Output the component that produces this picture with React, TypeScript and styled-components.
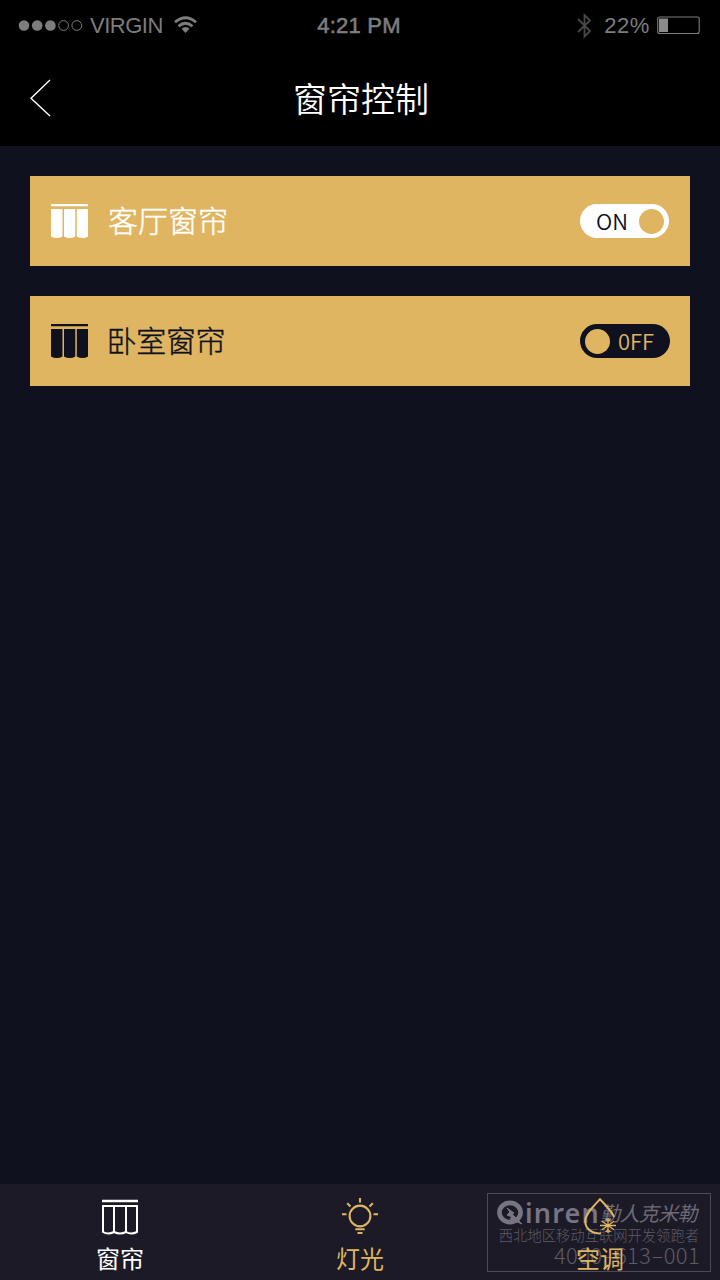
import React from 'react';
import styled, { createGlobalStyle } from 'styled-components';

const GOLD = '#dfb561';
const NAVY = '#10111f';

const GlobalStyle = createGlobalStyle`
  * { box-sizing: border-box; }
  body { margin: 0; background: ${NAVY}; }
`;

const Screen = styled.div`
  position: relative;
  display: flex;
  flex-direction: column;
  width: 720px;
  height: 1280px;
  overflow: hidden;
  background: ${NAVY};
  font-family: 'Noto Sans CJK SC', sans-serif;
`;

const StatusBar = styled.header`
  display: grid;
  grid-template-columns: 1fr auto 1fr;
  align-items: center;
  height: 52px;
  padding: 0 20px 0 18px;
  background: #000;
  color: #7d7d7d;
  font: 22px/52px 'Liberation Sans', sans-serif;
`;

const StatusGroup = styled.div<{ $end?: boolean }>`
  display: flex;
  align-items: center;
  justify-content: ${p => (p.$end ? 'flex-end' : 'flex-start')};
`;

const Carrier = styled.span`
  margin: 0 11px 0 7px;
  letter-spacing: -0.5px;
`;

const Clock = styled.span`
  -webkit-text-stroke: 0.6px currentColor;
  letter-spacing: 0.25px;
`;

const Percent = styled.span`
  margin: 0 7px 0 12px;
  letter-spacing: 0.6px;
`;

const NavBar = styled.nav`
  display: grid;
  grid-template-columns: 60px 1fr 60px;
  align-items: center;
  height: 94px;
  background: #000;
  color: #fff;
`;

const BackButton = styled.button`
  display: flex;
  padding: 0 0 2px 29px;
  border: 0;
  background: none;
`;

const Title = styled.h1`
  margin: 0;
  padding: 0 0 3px 2px;
  font-size: 34px;
  font-weight: 350;
  line-height: 91px;
  text-align: center;
`;

const List = styled.main`
  display: flex;
  flex: 1;
  flex-direction: column;
  gap: 30px;
  padding: 30px;
`;

const Row = styled.section<{ $on: boolean }>`
  display: flex;
  align-items: center;
  height: 90px;
  padding: 0 20px 0 21px;
  background: ${GOLD};
  color: ${p => (p.$on ? '#fff' : NAVY)};
`;

const RowLabel = styled.span<{ $on: boolean }>`
  flex: 1;
  padding-bottom: 3px;
  margin-left: ${p => (p.$on ? 19 : 17.5)}px;
  font-size: 30px;
  font-weight: 300;
  -webkit-text-stroke: 0.4px currentColor;
  line-height: 87px;
  letter-spacing: ${p => (p.$on ? 0 : -0.3)}px;
`;

const Toggle = styled.button<{ $on: boolean }>`
  display: flex;
  flex-direction: ${p => (p.$on ? 'row' : 'row-reverse')};
  align-items: center;
  justify-content: space-between;
  width: ${p => (p.$on ? 89 : 90)}px;
  height: 34px;
  margin-right: ${p => (p.$on ? 1 : 0)}px;
  padding: ${p => (p.$on ? '0 5px 0 16px' : '0 16px 0 5px')};
  border: 0;
  border-radius: 17px;
  background: ${p => (p.$on ? '#fff' : NAVY)};
  color: ${p => (p.$on ? NAVY : GOLD)};
  font: 350 22px/32px 'Noto Sans CJK SC', sans-serif;
`;

const ToggleText = styled.span`
  padding-bottom: 2px;
`;

const Knob = styled.span`
  width: 25px;
  height: 25px;
  border-radius: 50%;
  background: ${GOLD};
`;

const TabBar = styled.footer`
  display: grid;
  grid-template-columns: repeat(3, 1fr);
  height: 96px;
  background: #1c1a26;
`;

const Tab = styled.button<{ $active?: boolean }>`
  position: relative;
  z-index: 2;
  display: flex;
  flex-direction: column;
  align-items: center;
  padding: 13px 0 0;
  border: 0;
  background: none;
  color: ${p => (p.$active ? '#fff' : GOLD)};
  font: 400 24px/42px 'Noto Sans CJK SC', sans-serif;
`;

const Stamp = styled.aside`
  position: absolute;
  z-index: 1;
  right: 9px;
  bottom: 8px;
  display: flex;
  flex-direction: column;
  align-items: flex-end;
  width: 224px;
  height: 79px;
  padding: 5px 11px 0;
  border: 1px solid #4b4a55;
  color: #5d5b67;
  white-space: nowrap;
  pointer-events: none;
`;

const StampBrand = styled.div`
  display: flex;
  align-items: center;
  height: 28px;
`;

const BrandLatin = styled.span`
  margin-left: 1px;
  color: #777581;
  font: 600 27px/28px 'Noto Sans', sans-serif;
  letter-spacing: 1.2px;
`;

const BrandHan = styled.span`
  margin-right: 2px;
  color: #6d6b76;
  font-size: 20px;
  font-style: italic;
  line-height: 28px;
  font-weight: 400;
  letter-spacing: -0.6px;
`;

const StampLine = styled.div`
  margin-top: -1px;
  font-size: 14.3px;
  font-weight: 300;
  line-height: 17px;
`;

const StampPhone = styled.div`
  margin-right: -1px;
  font-size: 22px;
  font-weight: 300;
  line-height: 23px;
  letter-spacing: 0.3px;
`;

const PhoneDash = styled.span`
  display: inline-block;
  margin: 0 2.5px;
  transform: scaleX(1.7);
`;

const SignalDots = () => (
  <svg width="65" height="12" fill="currentColor">
    {[6, 19.2, 32.4].map(x => <circle key={x} cx={x} cy="5.5" r="5.3" />)}
    {[45.6, 58.8].map(x => <circle key={x} cx={x} cy="5.5" r="4.9" fill="none" stroke="currentColor" />)}
  </svg>
);

const WifiIcon = () => (
  <svg width="24" height="20" viewBox="0 0 24 20" fill="none" stroke="currentColor" strokeWidth="2.8">
    <path d="M1 6.2Q11.5-2.8 22 6.2M4.5 10.2Q11.5 4.2 18.5 10.2" />
    <path d="M7.5 12.7Q11.5 9.5 15.5 12.7L11.5 17Z" fill="currentColor" stroke="none" />
  </svg>
);

const BluetoothIcon = () => (
  <svg width="15" height="26" viewBox="0 0 15 26" fill="none" stroke="#484848" strokeWidth="1.8">
    <path d="M1 6L13 18L7.5 23.5V2L13 7.5L1 19" />
  </svg>
);

const BatteryIcon = () => (
  <svg width="43" height="20" viewBox="0 0 43 20">
    <rect x="0.7" y="1" width="41.5" height="16.5" rx="2" fill="none" stroke="currentColor" strokeWidth="1.1" />
    <path d="M2 2.5H11V16H2Z" fill="#8b8b8b" />
  </svg>
);

const BackIcon = () => (
  <svg width="22" height="38" fill="none" stroke="#fff" strokeWidth="1.4">
    <path d="M21 1L2 19.3L21 37" />
  </svg>
);

const CurtainIcon = () => (
  <svg width="38" height="34" viewBox="0 0 38 34" fill="currentColor">
    <path d="M0 0H37V2.2H0ZM0 5H11.5V32.5Q9 34 6 34Q2.5 34 0 32.5ZM13 5H24.3V32.5Q22 34 18.7 34Q15.5 34 13 32.5ZM25.8 5H37V32.5Q34.5 34 31.5 34Q28.5 34 25.8 32.5Z" />
  </svg>
);

const CurtainTabIcon = () => (
  <svg width="40" height="40" viewBox="0 0 40 40" fill="none" stroke="currentColor" strokeWidth="2">
    <path d="M2 4H38" strokeWidth="2.3" />
    <path d="M3 9H37V35Q31 38 26 35Q20 38 14 35Q8 38 3 35ZM14 9V35M26 9V35" />
  </svg>
);

const LampIcon = () => (
  <svg width="40" height="40" viewBox="0 0 40 40" fill="none" stroke="currentColor" strokeWidth="2.1">
    <circle cx="20" cy="19" r="10.4" />
    <path d="M20 1V5.5M2 17.2H6.5M33.5 17.2H38M7.2 6.2L10.5 9.5M32.8 6.2L29.5 9.5M15.3 32.2H24.7M17.5 36H22.5" />
  </svg>
);

const ClimateIcon = () => (
  <svg width="40" height="40" viewBox="0 0 40 40" fill="none" stroke="currentColor" strokeWidth="2">
    <path d="M21 36.3C11 37.2 5.2 31 5.2 24C5.2 17.5 13.2 9.5 20 2.3Q30.5 13 34.2 20" />
    <path strokeWidth="1.3" d="M28 21V36M20 28.5H36M22 24.3L34 32.7M34 24.3L22 32.7M25.6 22L28 24.2L30.4 22M25.6 35L28 32.8L30.4 35" />
  </svg>
);

const BrandMark = () => (
  <svg width="27" height="27" viewBox="0 0 27 27" fill="none" stroke="#777581">
    <ellipse cx="13" cy="12.5" rx="10.6" ry="9.6" strokeWidth="4.6" />
    <path d="M10 8L17 13L15 14L25 24L13 19L15 17L10 15L13 12Z" fill="#777581" strokeWidth="1" />
  </svg>
);

const curtains = [
  { name: '客厅窗帘', on: true, state: 'ON' },
  { name: '卧室窗帘', on: false, state: '0FF' },
];

export default function App() {
  return (
    <Screen>
      <GlobalStyle />
      <StatusBar>
        <StatusGroup><SignalDots /><Carrier>VIRGIN</Carrier><WifiIcon /></StatusGroup>
        <Clock>4:21 PM</Clock>
        <StatusGroup $end><BluetoothIcon /><Percent>22%</Percent><BatteryIcon /></StatusGroup>
      </StatusBar>
      <NavBar>
        <BackButton aria-label="返回"><BackIcon /></BackButton>
        <Title>窗帘控制</Title>
      </NavBar>
      <List>
        {curtains.map(c => (
          <Row key={c.name} $on={c.on}>
            <CurtainIcon />
            <RowLabel $on={c.on}>{c.name}</RowLabel>
            <Toggle $on={c.on}><ToggleText>{c.state}</ToggleText><Knob /></Toggle>
          </Row>
        ))}
      </List>
      <TabBar>
        <Tab $active><CurtainTabIcon />窗帘</Tab>
        <Tab><LampIcon />灯光</Tab>
        <Tab><ClimateIcon />空调</Tab>
      </TabBar>
      <Stamp>
        <StampBrand><BrandMark /><BrandLatin>inren</BrandLatin><BrandHan>勤人克米勒</BrandHan></StampBrand>
        <StampLine>西北地区移动互联网开发领跑者</StampLine>
        <StampPhone>4000<PhoneDash>-</PhoneDash>613<PhoneDash>-</PhoneDash>001</StampPhone>
      </Stamp>
    </Screen>
  );
}
